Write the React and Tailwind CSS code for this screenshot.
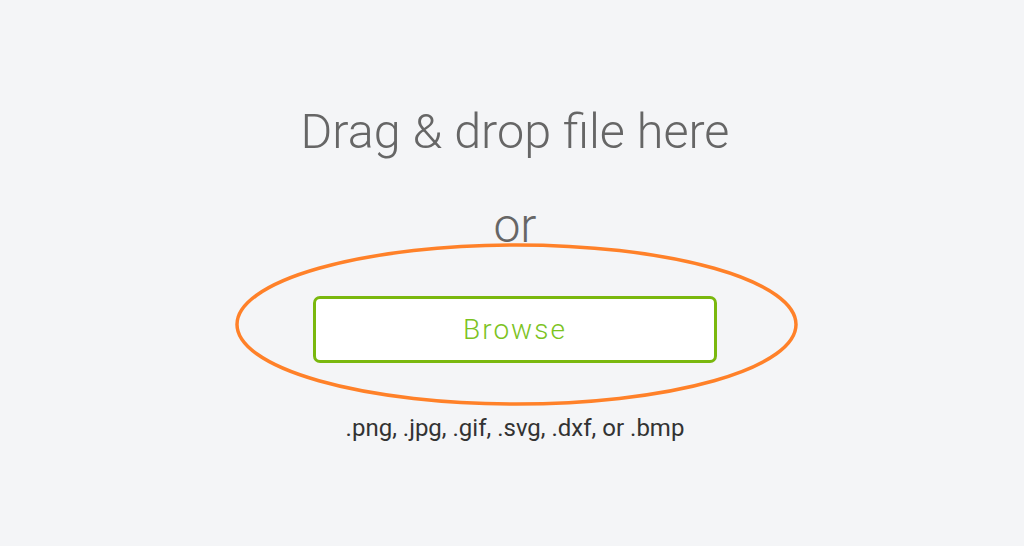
import React from 'react'

export default function App() {
  return (
    <div className="relative w-[1024px] h-[546px] bg-[#f4f5f7] overflow-hidden" style={{ fontFamily: 'Roboto, "Liberation Sans", sans-serif' }}>
      <div className="flex flex-col items-center pl-[6px] pt-[104px]">
        <h1 className="text-[48.5px] leading-[56px] font-light text-[#666666]">Drag &amp; drop file here</h1>
        <p className="mt-[38px] text-[48px] leading-[56px] font-light text-[#666666]">or</p>
        <button className="mt-[42px] w-[404px] h-[67px] bg-white border-[3px] border-[#7ab80e] rounded-[7px] text-[28px] font-light tracking-[2px] text-[#7cc31f]">
          Browse
        </button>
        <p className="mt-[50px] text-[24px] leading-[30px] text-[#333333]">.png, .jpg, .gif, .svg, .dxf, or .bmp</p>
      </div>

      {/* annotation ellipse */}
      <svg className="absolute left-0 top-0 pointer-events-none" width="1024" height="546">
        <ellipse cx="516.5" cy="324.5" rx="279.5" ry="79.5" fill="none" stroke="#ff8129" strokeWidth="3.5" />
      </svg>
    </div>
  )
}
